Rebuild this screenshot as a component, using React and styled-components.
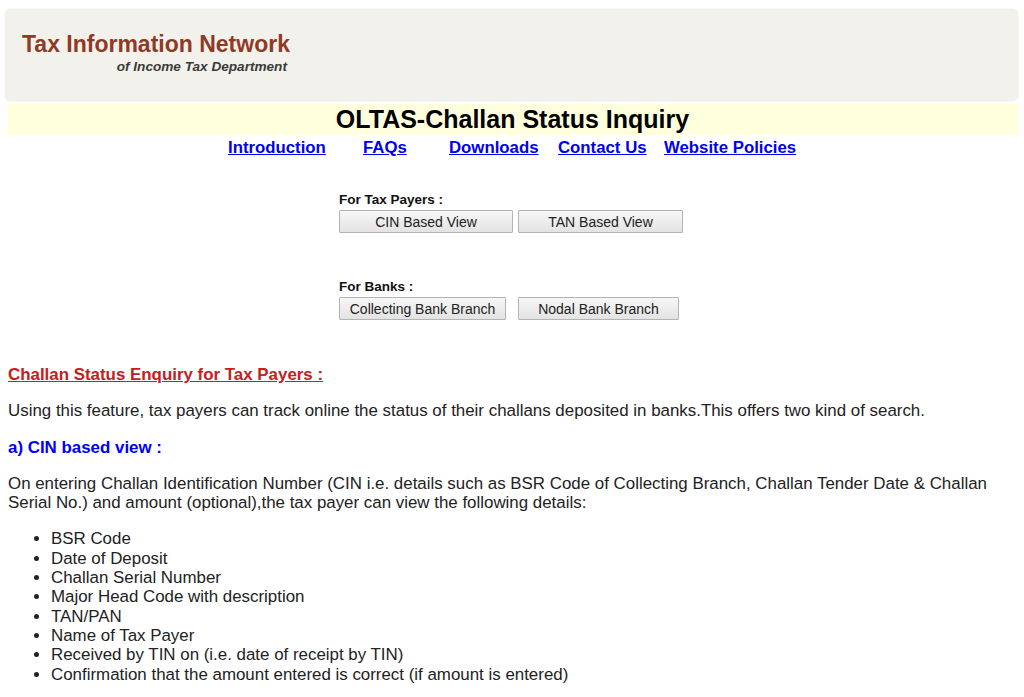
import React from "react";
import styled, { createGlobalStyle } from "styled-components";

const GlobalStyle = createGlobalStyle`
  body {
    margin: 0;
    background: #ffffff;
    font-family: "Liberation Sans", Arial, sans-serif;
    color: #222222;
  }
`;

const Page = styled.div`
  width: 1024px;
  padding-top: 9px;
`;

const Header = styled.div`
  margin: 0 6px 0 5px;
  height: 92px;
  background: #f2f1eb;
  border-radius: 6px;
  box-shadow: 0 0 2px #e4e3dc;
  display: flex;
  flex-direction: column;
  align-items: flex-start;
  padding: 22px 0 0 17px;
  box-sizing: border-box;
`;

const Brand = styled.div`
  display: flex;
  flex-direction: column;
  align-items: flex-end;
`;

const BrandName = styled.div`
  font-size: 23px;
  font-weight: bold;
  color: #8e3a25;
  line-height: 26px;
`;

const BrandSub = styled.div`
  font-size: 13.6px;
  font-weight: bold;
  font-style: italic;
  color: #3a3a3a;
  margin: 2px 3px 0 0;
  line-height: 16px;
`;

const TitleBar = styled.h1`
  margin: 3px 6px 0 7px;
  height: 31px;
  background: #ffffdd;
  font-size: 25px;
  line-height: 31px;
  font-weight: bold;
  color: #000;
  text-align: center;
`;

const Nav = styled.div`
  display: flex;
  justify-content: center;
  margin-top: 2px;
  height: 22px;
  align-items: center;
`;

const NavCell = styled.div`
  width: ${(p) => p.w}px;
  flex-shrink: 0;
  white-space: nowrap;
`;

const NavLink = styled.a`
  font-size: 16.8px;
  font-weight: bold;
  color: #0000ee;
  text-decoration: underline;
  cursor: pointer;
`;

const Panel = styled.div`
  width: 346px;
  margin: 33px auto 0;
`;

const Group = styled.div`
  margin-bottom: ${(p) => p.gap || 0}px;
`;

const GroupLabel = styled.div`
  font-size: 13.5px;
  font-weight: bold;
  color: #111;
  line-height: 16px;
  margin-bottom: 2px;
`;

const ButtonRow = styled.div`
  display: flex;
  gap: ${(p) => p.gap}px;
`;

const Button = styled.button`
  width: ${(p) => p.w}px;
  height: 23px;
  font-family: "Liberation Sans", Arial, sans-serif;
  font-size: 14px;
  color: #222;
  background: linear-gradient(#f7f7f7, #e3e3e3);
  border: 1px solid #b4b4b4;
  border-radius: 1px;
  padding: 0;
  cursor: pointer;
`;

const Content = styled.div`
  padding: 0 8px;
  margin-top: 45px;
  font-size: 16.9px;
  line-height: 19.3px;
`;

const SectionHead = styled.p`
  margin: 0 0 17px;
  font-weight: bold;
  color: ${(p) => p.color};
  text-decoration: ${(p) => (p.underline ? "underline" : "none")};
`;

const Para = styled.p`
  margin: 0 0 17px;
`;

const List = styled.ul`
  margin: 0;
  padding-left: 43px;
`;

const navItems = [
  ["Introduction", 135],
  ["FAQs", 86],
  ["Downloads", 109],
  ["Contact Us", 106],
  ["Website Policies", 132],
];

const details = [
  "BSR Code",
  "Date of Deposit",
  "Challan Serial Number",
  "Major Head Code with description",
  "TAN/PAN",
  "Name of Tax Payer",
  "Received by TIN on (i.e. date of receipt by TIN)",
  "Confirmation that the amount entered is correct (if amount is entered)",
];

export default function App() {
  return (
    <Page>
      <GlobalStyle />
      <Header>
        <Brand>
          <BrandName>Tax Information Network</BrandName>
          <BrandSub>of Income Tax Department</BrandSub>
        </Brand>
      </Header>
      <TitleBar>OLTAS-Challan Status Inquiry</TitleBar>
      <Nav>
        {navItems.map(([label, w]) => (
          <NavCell key={label} w={w}>
            <NavLink>{label}</NavLink>
          </NavCell>
        ))}
      </Nav>

      <Panel>
        <Group gap={46}>
          <GroupLabel>For Tax Payers :</GroupLabel>
          <ButtonRow gap={5}>
            <Button w={174}>CIN Based View</Button>
            <Button w={165}>TAN Based View</Button>
          </ButtonRow>
        </Group>
        <Group>
          <GroupLabel>For Banks :</GroupLabel>
          <ButtonRow gap={12}>
            <Button w={167}>Collecting Bank Branch</Button>
            <Button w={161}>Nodal Bank Branch</Button>
          </ButtonRow>
        </Group>
      </Panel>

      <Content>
        <SectionHead color="#c42020" underline>
          Challan Status Enquiry for Tax Payers :
        </SectionHead>
        <Para>
          Using this feature, tax payers can track online the status of their
          challans deposited in banks.This offers two kind of search.
        </Para>
        <SectionHead color="#0000ff">a) CIN based view :</SectionHead>
        <Para>
          On entering Challan Identification Number (CIN i.e. details such as
          BSR Code of Collecting Branch, Challan Tender Date &amp; Challan
          Serial No.) and amount (optional),the tax payer can view the
          following details:
        </Para>
        <List>
          {details.map((d) => (
            <li key={d}>{d}</li>
          ))}
        </List>
      </Content>
    </Page>
  );
}
